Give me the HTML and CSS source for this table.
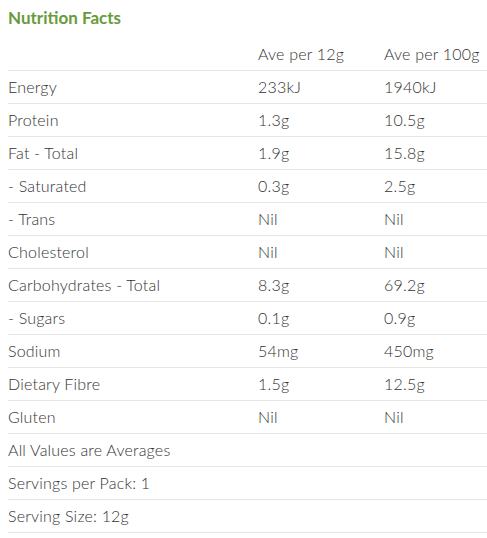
FILE: index.html
```html
<!DOCTYPE html>
<html>
<head>
<meta charset="utf-8">
<link rel="stylesheet" href="styles.css">
</head>
<body>
<h2 class="title">Nutrition Facts</h2>
<table class="nf">
<colgroup><col class="c1"><col class="c2"><col class="c3"></colgroup>
<thead>
<tr><th></th><th>Ave per 12g</th><th>Ave per 100g</th></tr>
</thead>
<tbody>
<tr><td>Energy</td><td>233kJ</td><td>1940kJ</td></tr>
<tr><td>Protein</td><td>1.3g</td><td>10.5g</td></tr>
<tr><td>Fat - Total</td><td>1.9g</td><td>15.8g</td></tr>
<tr><td>- Saturated</td><td>0.3g</td><td>2.5g</td></tr>
<tr><td>- Trans</td><td>Nil</td><td>Nil</td></tr>
<tr><td>Cholesterol</td><td>Nil</td><td>Nil</td></tr>
<tr><td>Carbohydrates - Total</td><td>8.3g</td><td>69.2g</td></tr>
<tr><td>- Sugars</td><td>0.1g</td><td>0.9g</td></tr>
<tr><td>Sodium</td><td>54mg</td><td>450mg</td></tr>
<tr><td>Dietary Fibre</td><td>1.5g</td><td>12.5g</td></tr>
<tr><td>Gluten</td><td>Nil</td><td>Nil</td></tr>
<tr><td colspan="3">All Values are Averages</td></tr>
<tr><td colspan="3">Servings per Pack: 1</td></tr>
<tr><td colspan="3">Serving Size: 12g</td></tr>
</tbody>
</table>
</body>
</html>
```
FILE: styles.css
```css
html, body {
  margin: 0;
  padding: 0;
  background: #fff;
}
body {
  padding: 8px 0 0 8px;
  font-family: Lato, "Open Sans", sans-serif;
  color: #333;
}
.title {
  margin: 0 0 10px 0;
  font-size: 17px;
  line-height: 20px;
  font-weight: 700;
  color: #689a3c;
}
.nf {
  width: 479px;
  border-collapse: collapse;
  table-layout: fixed;
  font-size: 16px;
  letter-spacing: 0.2px;
  font-weight: 300;
}
.c1 { width: 250px; }
.c2 { width: 126px; }
.nf th, .nf td {
  padding: 0;
  height: 32px;
  line-height: 32px;
  text-align: left;
  font-weight: 300;
  border-bottom: 1px solid #e6e6e6;
  white-space: nowrap;
}
```
